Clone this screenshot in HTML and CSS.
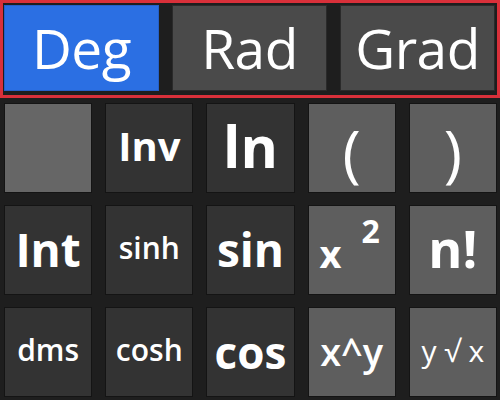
FILE: index.html
```html
<!DOCTYPE html>
<html>
<head>
<meta charset="utf-8">
<link rel="stylesheet" href="styles.css">
</head>
<body>
<div class="modes">
  <div class="mode active">Deg</div>
  <div class="mode">Rad</div>
  <div class="mode">Grad</div>
</div>
<div class="pad">
  <div class="key light blank"></div>
  <div class="key dark bold k-inv">Inv</div>
  <div class="key dark bold k-ln">ln</div>
  <div class="key light k-paren">(</div>
  <div class="key light k-paren">)</div>

  <div class="key dark bold k-big">Int</div>
  <div class="key dark semi k-small">sinh</div>
  <div class="key dark bold k-big">sin</div>
  <div class="key light bold k-sq">x<span class="sup">2</span></div>
  <div class="key light bold k-fact">n!</div>

  <div class="key dark semi k-small">dms</div>
  <div class="key dark semi k-small">cosh</div>
  <div class="key dark bold k-cos">cos</div>
  <div class="key light semi k-pow">x^y</div>
  <div class="key light semi k-root">y √ x</div>
</div>
</body>
</html>
```
FILE: styles.css
```css
html, body {
  margin: 0;
  padding: 0;
}
body {
  width: 500px;
  height: 400px;
  background: #1e1e1e;
  font-family: "Open Sans", "Noto Sans", sans-serif;
  color: #ffffff;
  overflow: hidden;
}
.modes {
  box-sizing: border-box;
  height: 98px;
  border: 3px solid #d9303a;
  padding: 2px 2px 4px 1px;
  display: flex;
  gap: 13px;
}
.mode {
  flex: 1;
  box-sizing: border-box;
  background: #4a4a4a;
  border: 1px solid #2a2a2a;
  display: flex;
  align-items: center;
  justify-content: center;
  font-size: 55px;
  font-weight: 400;
  letter-spacing: -0.5px;
  padding-bottom: 2px;
}
.mode.active {
  background: #2b6fe3;
  border-color: #2660c8;
}
.pad {
  margin-top: 5px;
  padding: 0 3px 0 4px;
  display: grid;
  grid-template-columns: repeat(5, 1fr);
  grid-template-rows: repeat(3, 90px);
  column-gap: 13px;
  row-gap: 12px;
}
.key {
  box-sizing: border-box;
  border: 1px solid #141414;
  display: flex;
  align-items: center;
  justify-content: center;
  line-height: 1;
}
.dark { background: #333333; }
.light { background: #5e5e5e; }
.blank { background: #666666; }
.bold { font-weight: 700; }
.semi { font-weight: 600; }
.k-inv { font-size: 40px; padding-bottom: 4px; }
.k-ln { font-size: 57px; padding-bottom: 4px; }
.k-paren { font-size: 62px; font-weight: 400; padding-top: 8px; }
.k-big { font-size: 46px; padding-bottom: 2px; }
.k-cos { font-size: 44px; padding-bottom: 0; }
.k-small { font-size: 30px; padding-bottom: 4px; }
.k-sq { font-size: 38px; padding-top: 6px; padding-right: 4px; }
.k-sq .sup {
  font-size: 32px;
  margin-left: 20px;
  position: relative;
  top: -22px;
}
.k-fact { font-size: 52px; padding-bottom: 4px; }
.k-pow { font-size: 38px; padding-bottom: 2px; }
.k-root { font-size: 30px; font-weight: 400; padding-bottom: 2px; }
```
